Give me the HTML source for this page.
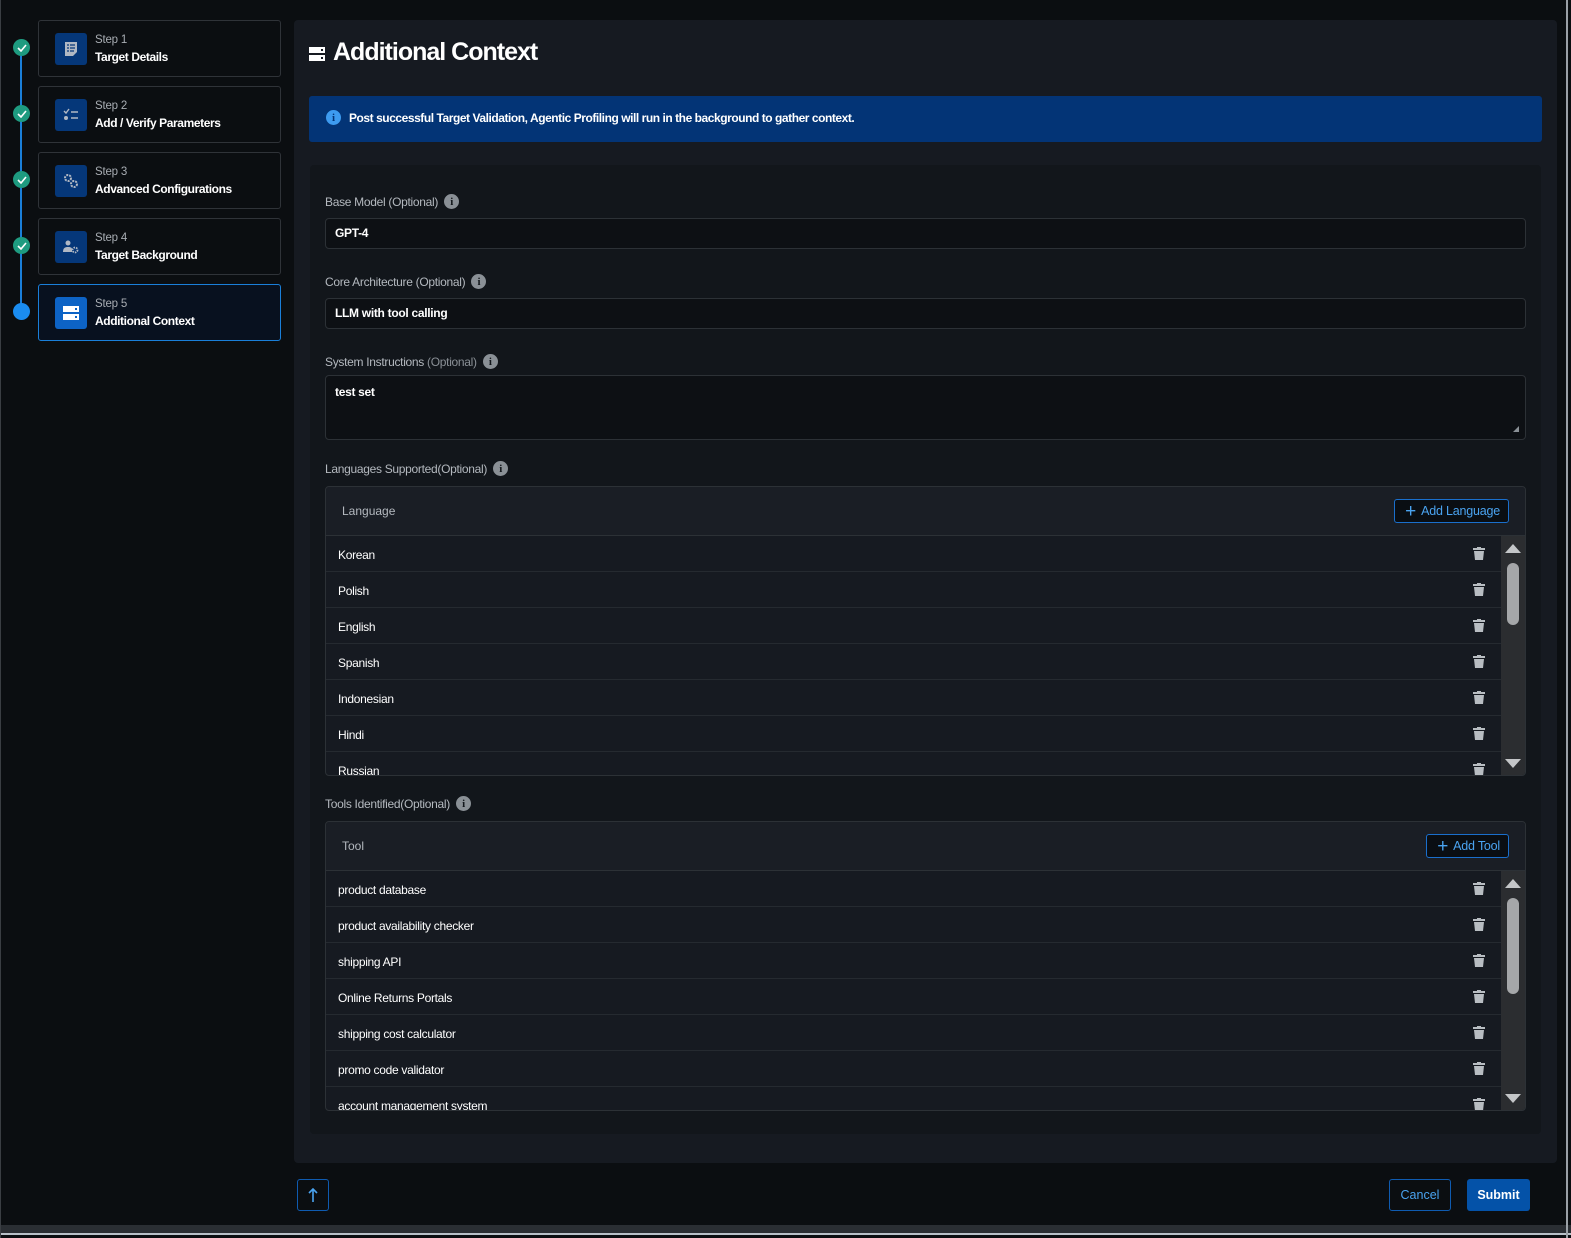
<!DOCTYPE html>
<html><head><meta charset="utf-8">
<style>
*{box-sizing:border-box;margin:0;padding:0}
body{width:1571px;height:1238px;background:#0b0e11;font-family:"Liberation Sans",sans-serif;color:#e6e8ea;position:relative;overflow:hidden;font-size:12px}
.abs{position:absolute}
.line{left:20px;top:47px;width:2px;height:264px;background:#1a7fd9}
.dot{left:13px;width:17px;height:17px;border-radius:50%;background:#1e9b80;display:flex;align-items:center;justify-content:center}
.step{left:38px;width:243px;height:57px;border:1px solid #2f3338;border-radius:3px;background:#0b0e11}
.step.act{border-color:#1a7fd9;background:#08111f}
.ib{position:absolute;left:16px;top:12px;width:32px;height:32px;border-radius:3px;background:#053779;display:flex;align-items:center;justify-content:center}
.act .ib{background:#0d63c5}
.st{position:absolute;left:56px;top:13px;font-size:11.5px;color:#a8adb3;letter-spacing:-.2px}
.sn{position:absolute;left:56px;top:29px;font-size:12px;font-weight:bold;color:#fff;letter-spacing:-.4px}
.card{left:294px;top:20px;width:1263px;height:1143px;background:#161a21;border-radius:4px}
.inner{left:310px;top:165px;width:1231px;height:969px;background:#12161b;border-radius:4px}
.lbl{left:325px;font-size:12px;color:#b4b9bf;letter-spacing:-.3px;display:flex;align-items:center}
.info{display:inline-flex;width:15px;height:15px;border-radius:50%;background:#8a9096;color:#12161b;font-weight:bold;font-size:11px;align-items:center;justify-content:center;margin-left:6px;font-family:"Liberation Serif",serif}
.inp{left:325px;width:1201px;background:#0d1014;border:1px solid #2c3136;border-radius:4px;padding-left:9px;font-size:12px;font-weight:bold;color:#fff;letter-spacing:-.3px}
.tbl{left:325px;width:1201px;border:1px solid #2c3136;border-radius:4px;background:#161a21;overflow:hidden}
.th{height:49px;background:#1a1e25;border-bottom:1px solid #2c3136;position:relative}
.th span{position:absolute;left:16px;top:17px;color:#b4b9bf;font-size:12px}
.btn{position:absolute;right:16px;top:12px;height:24px;border:1px solid #1a6fcc;border-radius:3px;background:#0a0e13;color:#4aa3f0;font-size:12.5px;display:flex;align-items:center;padding:0 8px 0 10px;letter-spacing:-.2px}
.btn b{font-weight:normal;font-size:19px;margin-right:5px;line-height:1}
.body{position:relative;overflow:hidden}
.row{height:36px;border-bottom:1px solid #252a30;position:relative;margin-right:24px}
.row span{position:absolute;left:12px;top:12px;font-size:12px;color:#fff;letter-spacing:-.3px}
.row svg{position:absolute;right:16px;top:10px}
.sb{position:absolute;right:0;top:0;width:24px;height:100%;background:#2b2d30}
.th2{position:absolute;left:4px;width:0;height:0;border-left:8px solid transparent;border-right:8px solid transparent}
</style></head><body>
<div class="abs line"></div>
<div class="abs dot" style="top:39px"><svg width="10" height="8"><path d="M1 4l3 3 5-6" stroke="#fff" stroke-width="1.6" fill="none"/></svg></div>
<div class="abs dot" style="top:105px"><svg width="10" height="8"><path d="M1 4l3 3 5-6" stroke="#fff" stroke-width="1.6" fill="none"/></svg></div>
<div class="abs dot" style="top:171px"><svg width="10" height="8"><path d="M1 4l3 3 5-6" stroke="#fff" stroke-width="1.6" fill="none"/></svg></div>
<div class="abs dot" style="top:237px"><svg width="10" height="8"><path d="M1 4l3 3 5-6" stroke="#fff" stroke-width="1.6" fill="none"/></svg></div>
<div class="abs dot" style="top:303px;background:#1a8cf0"></div>

<div class="abs step" style="top:20px"><div class="ib"><svg width="14" height="16"><path d="M1 1h12v10l-4 4H1z" fill="#b0b8c4"/><path d="M3 4h2M6 4h5M3 7h2M6 7h5M3 10h2M6 10h4" stroke="#053779" stroke-width="1.3"/></svg></div><div class="st">Step 1</div><div class="sn">Target Details</div></div>
<div class="abs step" style="top:86px"><div class="ib"><svg width="16" height="14"><path d="M1 3l2 2 3-4" stroke="#b0b8c4" stroke-width="1.4" fill="none"/><circle cx="3" cy="10" r="2" fill="#b0b8c4"/><path d="M8 4h7M8 10h7" stroke="#b0b8c4" stroke-width="1.5"/></svg></div><div class="st">Step 2</div><div class="sn">Add / Verify Parameters</div></div>
<div class="abs step" style="top:152px"><div class="ib"><svg width="16" height="16"><circle cx="5" cy="5" r="3" fill="none" stroke="#b0b8c4" stroke-width="2" stroke-dasharray="2 1"/><circle cx="11" cy="11" r="3" fill="none" stroke="#b0b8c4" stroke-width="2" stroke-dasharray="2 1"/></svg></div><div class="st">Step 3</div><div class="sn">Advanced Configurations</div></div>
<div class="abs step" style="top:218px"><div class="ib"><svg width="16" height="16"><circle cx="5" cy="4" r="2.5" fill="#b0b8c4"/><path d="M0 13c0-4 2-5 5-5s4 1 4 2v3z" fill="#b0b8c4"/><circle cx="12" cy="11" r="2.5" fill="none" stroke="#b0b8c4" stroke-width="1.8" stroke-dasharray="1.5 1"/></svg></div><div class="st">Step 4</div><div class="sn">Target Background</div></div>
<div class="abs step act" style="top:284px"><div class="ib"><svg width="16" height="14"><rect x="0" y="0" width="16" height="6" fill="#fff"/><rect x="0" y="8" width="16" height="6" fill="#fff"/><rect x="12" y="2" width="2" height="2" fill="#0d63c5"/><rect x="12" y="10" width="2" height="2" fill="#0d63c5"/></svg></div><div class="st">Step 5</div><div class="sn">Additional Context</div></div>

<div class="abs card"></div>
<svg class="abs" style="left:309px;top:47px" width="16" height="14"><rect width="16" height="6" fill="#fff"/><rect y="8" width="16" height="6" fill="#fff"/><rect x="12" y="2" width="2" height="2" fill="#161a21"/><rect x="12" y="10" width="2" height="2" fill="#161a21"/></svg>
<div class="abs" style="left:333px;top:38px;font-size:25px;font-weight:bold;color:#fff;letter-spacing:-1px">Additional Context</div>
<div class="abs" style="left:309px;top:96px;width:1233px;height:46px;background:#033476;border-radius:3px"></div>
<div class="abs" style="left:326px;top:110px;width:15px;height:15px;border-radius:50%;background:#3d9bf0;color:#033476;font-weight:bold;font-size:11px;display:flex;align-items:center;justify-content:center;font-family:'Liberation Serif',serif">i</div>
<div class="abs" style="left:349px;top:111px;font-size:12px;font-weight:bold;color:#fff;letter-spacing:-.45px">Post successful Target Validation, Agentic Profiling will run in the background to gather context.</div>

<div class="abs inner"></div>
<div class="abs lbl" style="top:194px">Base Model (Optional)<span class="info">i</span></div>
<div class="abs inp" style="top:218px;height:31px;line-height:29px">GPT-4</div>
<div class="abs lbl" style="top:274px">Core Architecture (Optional)<span class="info">i</span></div>
<div class="abs inp" style="top:298px;height:31px;line-height:29px">LLM with tool calling</div>
<div class="abs lbl" style="top:354px">System Instructions <span style="color:#8a9096">&nbsp;(Optional)</span><span class="info">i</span></div>
<div class="abs inp" style="top:375px;height:65px;padding-top:9px">test set<svg style="position:absolute;right:6px;bottom:7px" width="6" height="6"><path d="M6 0V6H0z" fill="#8a9096"/></svg></div>
<div class="abs lbl" style="top:461px">Languages Supported(Optional)<span class="info">i</span></div>

<div class="abs tbl" style="top:486px;height:290px">
<div class="th"><span>Language</span><div class="btn"><b>+</b>Add Language</div></div>
<div class="body" style="height:240px">
<div class="sb"><div class="th2" style="top:8px;border-bottom:9px solid #c4c6c8"></div><div style="position:absolute;left:6px;top:27px;width:12px;height:62px;border-radius:6px;background:#a5a7a9"></div><div class="th2" style="bottom:8px;border-top:9px solid #c4c6c8"></div></div>
<div class="row"><span>Korean</span><svg width="12" height="14"><path d="M4 1h4v1h4v2H0V2h4z M1 5h10l-1 9H2z" fill="#b8bdc2"/></svg></div>
<div class="row"><span>Polish</span><svg width="12" height="14"><path d="M4 1h4v1h4v2H0V2h4z M1 5h10l-1 9H2z" fill="#b8bdc2"/></svg></div>
<div class="row"><span>English</span><svg width="12" height="14"><path d="M4 1h4v1h4v2H0V2h4z M1 5h10l-1 9H2z" fill="#b8bdc2"/></svg></div>
<div class="row"><span>Spanish</span><svg width="12" height="14"><path d="M4 1h4v1h4v2H0V2h4z M1 5h10l-1 9H2z" fill="#b8bdc2"/></svg></div>
<div class="row"><span>Indonesian</span><svg width="12" height="14"><path d="M4 1h4v1h4v2H0V2h4z M1 5h10l-1 9H2z" fill="#b8bdc2"/></svg></div>
<div class="row"><span>Hindi</span><svg width="12" height="14"><path d="M4 1h4v1h4v2H0V2h4z M1 5h10l-1 9H2z" fill="#b8bdc2"/></svg></div>
<div class="row"><span>Russian</span><svg width="12" height="14"><path d="M4 1h4v1h4v2H0V2h4z M1 5h10l-1 9H2z" fill="#b8bdc2"/></svg></div>
</div></div>

<div class="abs lbl" style="top:796px">Tools Identified(Optional)<span class="info">i</span></div>
<div class="abs tbl" style="top:821px;height:290px">
<div class="th"><span>Tool</span><div class="btn"><b>+</b>Add Tool</div></div>
<div class="body" style="height:240px">
<div class="sb"><div class="th2" style="top:8px;border-bottom:9px solid #c4c6c8"></div><div style="position:absolute;left:6px;top:27px;width:12px;height:96px;border-radius:6px;background:#a5a7a9"></div><div class="th2" style="bottom:8px;border-top:9px solid #c4c6c8"></div></div>
<div class="row"><span>product database</span><svg width="12" height="14"><path d="M4 1h4v1h4v2H0V2h4z M1 5h10l-1 9H2z" fill="#b8bdc2"/></svg></div>
<div class="row"><span>product availability checker</span><svg width="12" height="14"><path d="M4 1h4v1h4v2H0V2h4z M1 5h10l-1 9H2z" fill="#b8bdc2"/></svg></div>
<div class="row"><span>shipping API</span><svg width="12" height="14"><path d="M4 1h4v1h4v2H0V2h4z M1 5h10l-1 9H2z" fill="#b8bdc2"/></svg></div>
<div class="row"><span>Online Returns Portals</span><svg width="12" height="14"><path d="M4 1h4v1h4v2H0V2h4z M1 5h10l-1 9H2z" fill="#b8bdc2"/></svg></div>
<div class="row"><span>shipping cost calculator</span><svg width="12" height="14"><path d="M4 1h4v1h4v2H0V2h4z M1 5h10l-1 9H2z" fill="#b8bdc2"/></svg></div>
<div class="row"><span>promo code validator</span><svg width="12" height="14"><path d="M4 1h4v1h4v2H0V2h4z M1 5h10l-1 9H2z" fill="#b8bdc2"/></svg></div>
<div class="row"><span>account management system</span><svg width="12" height="14"><path d="M4 1h4v1h4v2H0V2h4z M1 5h10l-1 9H2z" fill="#b8bdc2"/></svg></div>
</div></div>

<div class="abs" style="left:297px;top:1179px;width:32px;height:32px;border:1px solid #0f5bb0;border-radius:3px;display:flex;align-items:center;justify-content:center"><svg width="10" height="16"><path d="M5 15V2M1 6l4-4 4 4" stroke="#4aa3f0" stroke-width="1.6" fill="none"/></svg></div>
<div class="abs" style="left:1389px;top:1179px;width:62px;height:32px;border:1px solid #0f5bb0;border-radius:3px;color:#4aa3f0;font-size:12.5px;display:flex;align-items:center;justify-content:center">Cancel</div>
<div class="abs" style="left:1467px;top:1179px;width:63px;height:32px;background:#0452a8;border-radius:3px;color:#fff;font-weight:bold;font-size:12.5px;display:flex;align-items:center;justify-content:center">Submit</div>

<div class="abs" style="left:0;top:1225px;width:1571px;height:8px;background:#2a2e33"></div>
<div class="abs" style="left:0;top:1233px;width:1571px;height:2px;background:#b8c0c8"></div>
<div class="abs" style="left:1566px;top:0;width:2px;height:1238px;background:#9aa0a6"></div>
<div class="abs" style="left:0;top:0;width:1px;height:1238px;background:#3a3e43"></div>
</body></html>
